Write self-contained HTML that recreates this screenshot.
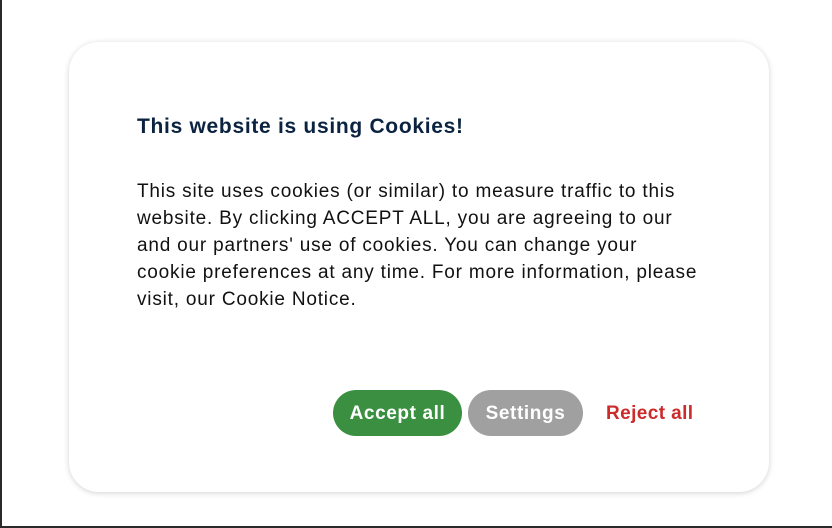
<!DOCTYPE html>
<html><head><style>
html,body{margin:0;padding:0;}
body{width:832px;height:528px;background:#fff;position:relative;overflow:hidden;font-family:"Liberation Sans",Arial,sans-serif;}
.lb{position:absolute;left:0;top:0;width:2px;height:528px;background:#2a2a2a;}
.bb{position:absolute;left:0;top:526px;width:832px;height:2px;background:#2a2a2a;}
.card{position:absolute;left:69px;top:42px;width:700px;height:450px;border-radius:30px;background:#fff;box-shadow:0 1px 6px rgba(0,0,0,0.18);}
h1{position:absolute;left:137px;top:115px;margin:0;font-size:21px;letter-spacing:0.7px;font-weight:bold;color:#0b2340;white-space:nowrap;}
.txt{position:absolute;left:137px;top:178px;font-size:19px;letter-spacing:0.8px;line-height:27px;color:#111;white-space:nowrap;}
.btn{position:absolute;top:390px;height:46px;border-radius:23px;color:#fff;font-weight:bold;font-size:19px;letter-spacing:0.6px;line-height:48px;text-align:center;}
.a{left:333px;width:129px;background:#3a9040;}
.s{left:468px;width:115px;background:#a0a0a0;}
.r{position:absolute;left:606px;top:391px;line-height:46px;font-size:19px;letter-spacing:0.4px;font-weight:bold;color:#cc2b2b;}
</style></head><body>
<div class="lb"></div><div class="bb"></div>
<div class="card"></div>
<h1>This website is using Cookies!</h1>
<div class="txt">This site uses cookies (or similar) to measure traffic to this<br>website. By clicking ACCEPT ALL, you are agreeing to our<br>and our partners' use of cookies. You can change your<br>cookie preferences at any time. For more information, please<br>visit, our Cookie Notice.</div>
<div class="btn a">Accept all</div>
<div class="btn s">Settings</div>
<div class="r">Reject all</div>
</body></html>
